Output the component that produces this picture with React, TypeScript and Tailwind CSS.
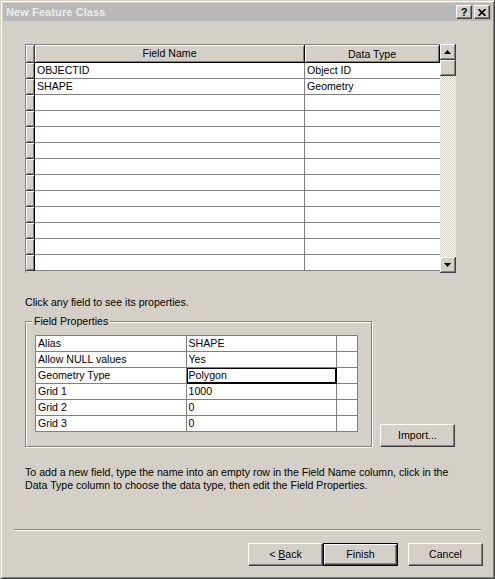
import React from "react";

const raised = "bg-[#d4d0c8] border-r border-b border-[#404040] shadow-[inset_1px_1px_0_#fff,inset_-1px_-1px_0_#808080]";

function Btn({ children, w, def }: { children: React.ReactNode; w: string; def?: boolean }) {
  return (
    <div className={`${w} h-[23px] flex items-center justify-center ${def ? "border border-black" : ""}`}>
      <div className="w-full h-full flex items-center justify-center border-l border-t border-white bg-[#d4d0c8] border-r border-b border-r-[#404040] border-b-[#404040] shadow-[inset_-1px_-1px_0_#808080]">
        {children}
      </div>
    </div>
  );
}

function Arrow({ up }: { up?: boolean }) {
  return (
    <svg width="7" height="4" viewBox="0 0 7 4">
      {up ? <path d="M3.5 0 L7 4 L0 4 Z" fill="#000" /> : <path d="M0 0 L7 0 L3.5 4 Z" fill="#000" />}
    </svg>
  );
}

export default function App() {
  const rows = [
    ["OBJECTID", "Object ID"],
    ["SHAPE", "Geometry"],
    ...Array.from({ length: 11 }, () => ["", ""]),
  ];
  const props = [
    ["Alias", "SHAPE"],
    ["Allow NULL values", "Yes"],
    ["Geometry Type", "Polygon"],
    ["Grid 1", "1000"],
    ["Grid 2", "0"],
    ["Grid 3", "0"],
  ];
  return (
    <div
      className="w-[495px] h-[579px] bg-[#d4d0c8] border-t border-l border-[#d4d0c8] border-r border-b border-r-[#404040] border-b-[#404040] shadow-[inset_1px_1px_0_#fff,inset_-1px_-1px_0_#808080] flex flex-col text-black text-[10.6px] leading-none"
      style={{ fontFamily: '"Liberation Sans", Arial, sans-serif' }}
    >
      {/* title bar */}
      <div className="mx-[2px] mt-[2px] h-[18px] bg-[#b9b9b9] flex items-center justify-between pl-[3px] pr-[2px]">
        <span className="font-bold text-[11px] text-[#ebebeb] tracking-[0.1px]">New Feature Class</span>
        <div className="flex items-center gap-[2px]">
          <div className="w-[16px] h-[14px] bg-[#d4d0c8] border-l border-t border-white border-r border-b border-r-[#404040] border-b-[#404040] shadow-[inset_-1px_-1px_0_#808080] flex items-center justify-center font-bold text-[11px]">?</div>
          <div className="w-[16px] h-[14px] bg-[#d4d0c8] border-l border-t border-white border-r border-b border-r-[#404040] border-b-[#404040] shadow-[inset_-1px_-1px_0_#808080] flex items-center justify-center">
            <svg width="8" height="7" viewBox="0 0 8 7">
              <path d="M0.5 0 L7.5 7 M7.5 0 L0.5 7" stroke="#000" strokeWidth="1.6" />
            </svg>
          </div>
        </div>
      </div>

      {/* grid */}
      <div className="ml-[24px] mt-[23px] flex w-[432px] h-[229px]">
        <div className="flex flex-col w-[415px] border-l border-t border-[#808080]">
          <div className="flex h-[18px]">
            <div className={`w-[9px] ${raised}`} />
            <div className={`w-[270px] ${raised} border-r-black border-b-black flex items-center justify-center`}>Field Name</div>
            <div className={`flex-1 ${raised} border-r-black border-b-black flex items-center justify-center pt-[1px]`}>Data Type</div>
          </div>
          {rows.map((r, i) => (
            <div key={i} className="flex h-[16px]">
              <div className={`w-[9px] ${raised} border-r-black`} />
              <div className="w-[270px] bg-white border-r border-b border-[#808080] flex items-center pl-[2px]">{r[0]}</div>
              <div className="flex-1 bg-white border-b border-[#808080] flex items-center pl-[2px]">{r[1]}</div>
            </div>
          ))}
        </div>
        <div className="w-[16px] flex flex-col">
          <div className={`h-[16px] ${raised} flex items-center justify-center`}><Arrow up /></div>
          <div className={`h-[16px] ${raised}`} />
          <div className="flex-1 bg-[repeating-conic-gradient(#fff_0_25%,#d4d0c8_0_50%)] bg-[length:2px_2px]" />
          <div className={`h-[16px] ${raised} flex items-center justify-center`}><Arrow /></div>
        </div>
      </div>

      <div className="ml-[24px] mt-[24px]">Click any field to see its properties.</div>

      {/* field properties + import */}
      <div className="ml-[24px] mt-[13px] flex items-end">
        <div className="relative w-[347px] h-[126px] border border-[#808080] shadow-[inset_1px_1px_0_#fff,1px_1px_0_#fff] pt-[13px] pl-[9px]">
          <span className="absolute left-[6px] top-[-6px] bg-[#d4d0c8] px-[2px]">Field Properties</span>
          <div className="w-[323px] border-l border-t border-[#808080]">
            {props.map((p, i) => (
              <div key={i} className="flex h-[16px]">
                <div className="w-[151px] bg-white border-r border-b border-[#808080] flex items-center pl-[2px]">{p[0]}</div>
                {i === 2 ? (
                  <div className="w-[151px] bg-white border border-black border-r-2 border-b-2 flex items-center pl-[1px]">{p[1]}</div>
                ) : (
                  <div className="w-[151px] bg-white border-r border-b border-[#808080] flex items-center pl-[2px]">{p[1]}</div>
                )}
                <div className="w-[21px] bg-white border-r border-b border-[#808080]" />
              </div>
            ))}
          </div>
        </div>
        <div className="ml-[8px] mb-[0px]">
          <Btn w="w-[75px]">Import...</Btn>
        </div>
      </div>

      <div className="ml-[24px] mt-[19px] leading-[13px]">
        To add a new field, type the name into an empty row in the Field Name column, click in the
        <br />
        Data Type column to choose the data type, then edit the Field Properties.
      </div>

      <div className="mx-[13px] mt-[37px] border-t border-[#808080] border-b border-b-white" />

      <div className="mt-[12px] flex justify-end pr-[11px]">
        <Btn w="w-[75px]">
          <span>&lt; <u>B</u>ack</span>
        </Btn>
        <Btn w="w-[75px]" def>Finish</Btn>
        <div className="w-[10px]" />
        <Btn w="w-[75px]">Cancel</Btn>
      </div>
    </div>
  );
}
